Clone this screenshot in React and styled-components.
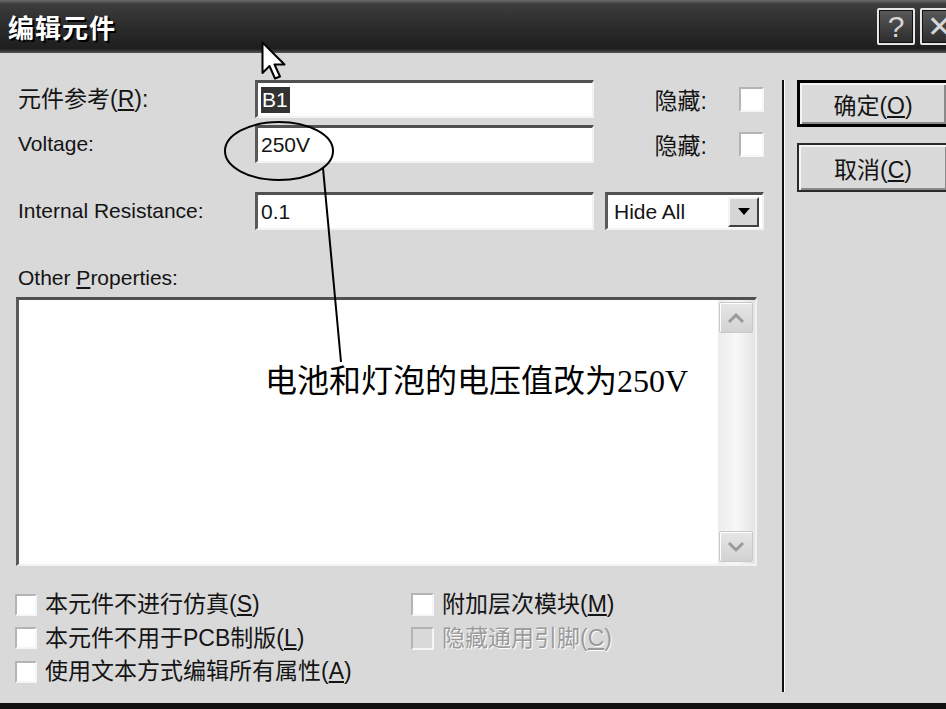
import React from 'react';
import styled, { createGlobalStyle } from 'styled-components';

const Global = createGlobalStyle`
  html, body { margin: 0; padding: 0; background: #d9d9d9; }
  #root { width: 946px; height: 709px; }
`;

const UI = `"Liberation Sans", "Noto Sans CJK SC", Arial, sans-serif`;

const Window = styled.div`
  position: relative;
  width: 946px;
  height: 709px;
  overflow: hidden;
  display: flex;
  flex-direction: column;
  background: #d9d9d9;
  font-family: ${UI};
  font-size: 21px;
  color: #141414;
`;

const TitleBar = styled.div`
  height: 53px;
  flex: none;
  display: flex;
  align-items: center;
  padding-left: 8px;
  background: linear-gradient(#6a6a6a 0, #3c3c3c 4px, #2e2e2e 45%, #1e1e1e 92%, #555 100%);
`;

const Title = styled.div`
  flex: 1;
  font-family: "Noto Sans CJK SC", sans-serif;
  font-weight: 700;
  font-size: 26px;
  letter-spacing: 1px;
  color: #fff;
  text-shadow: 2px 2px 0 #000;
`;

const TitleButtons = styled.div`
  display: flex;
  gap: 5px;
  margin-right: -12px;
  align-self: flex-start;
  margin-top: 8px;
`;

const TitleBtn = styled.div`
  width: 38px;
  height: 37px;
  box-sizing: border-box;
  border: 2px solid #e6e6e6;
  border-radius: 2px;
  box-shadow: inset 0 0 0 1px #111;
  background: linear-gradient(#5a5a5a, #2c2c2c);
  color: #d6d6d6;
  font-family: "Liberation Sans", sans-serif;
  font-size: 30px;
  line-height: 1;
  display: flex;
  align-items: center;
  justify-content: center;
`;

const Body = styled.div`
  flex: 1;
  display: flex;
`;

const LeftPane = styled.div`
  width: 782px;
  flex: none;
  padding-top: 27px;
  box-sizing: border-box;
`;

const Row = styled.div`
  display: grid;
  grid-template-columns: 255px 339px 170px;
  height: 38px;
  align-items: center;
  margin-top: ${p => p.$top || 0}px;
`;

const Label = styled.div`
  padding-left: 18px;
  font-size: ${p => (p.$cjk ? 23 : 21)}px;
  line-height: 24px;
  white-space: nowrap;
`;

const Sunken = styled.div`
  box-sizing: border-box;
  border-style: solid;
  border-width: 3px 2px 2px 3px;
  border-color: #505050 #f2f2f2 #f2f2f2 #5a5a5a;
  background: #fff;
`;

const Input = styled(Sunken)`
  height: 38px;
  display: flex;
  align-items: center;
  padding-left: 3px;
  font-size: 21px;
`;

const Selected = styled.span`
  background: #333;
  color: #fff;
  padding: 0 2px 0 1px;
  line-height: 26px;
`;

const HideGroup = styled.div`
  display: flex;
  justify-content: flex-end;
  align-items: center;
  gap: 32px;
  font-size: 23px;
`;

const Box = styled.div`
  width: ${p => p.$size || 22}px;
  height: ${p => p.$size || 22}px;
  box-sizing: border-box;
  flex: none;
  border-style: solid;
  border-width: 2px;
  border-color: #b4b4b4 #f6f6f6 #f6f6f6 #b4b4b4;
  background: ${p => (p.$disabled ? '#d9d9d9' : '#fff')};
`;

const Select = styled(Sunken)`
  justify-self: end;
  width: 159px;
  height: 38px;
  display: flex;
  align-items: center;
  justify-content: space-between;
  padding: 0 3px 0 6px;
`;

const DropBtn = styled.div`
  width: 31px;
  height: 30px;
  box-sizing: border-box;
  background: #d6d6d6;
  border-style: solid;
  border-width: 2px;
  border-color: #f4f4f4 #404040 #404040 #f4f4f4;
  display: flex;
  align-items: center;
  justify-content: center;
`;

const Arrow = styled.div`
  width: 0;
  height: 0;
  border-left: 6px solid transparent;
  border-right: 6px solid transparent;
  border-top: 7px solid #000;
`;

const SectionLabel = styled(Label)`
  margin-top: 36px;
`;

const TextArea = styled(Sunken)`
  margin: 7px 0 0 16px;
  width: 741px;
  height: 269px;
  display: flex;
`;

const AreaContent = styled.div`
  flex: 1;
`;

const ScrollBar = styled.div`
  width: 34px;
  display: flex;
  flex-direction: column;
  justify-content: space-between;
  padding: 2px 2px 2px 1px;
  background: linear-gradient(90deg, #ececec, #f8f8f8 50%, #e4e4e4);
`;

const ScrollBtn = styled.div`
  height: 31px;
  box-sizing: border-box;
  border: 1px solid #c8c8c8;
  border-radius: 2px;
  box-shadow: inset 1px 1px 0 #fff;
  background: linear-gradient(#e6e6e6, #d2d2d2);
  display: flex;
  align-items: center;
  justify-content: center;
`;

const Checks = styled.div`
  margin: 27px 0 0 15px;
  display: grid;
  grid-template-columns: 396px auto;
  grid-auto-rows: 23px;
  row-gap: 10.5px;
`;

const CheckItem = styled.div`
  display: flex;
  align-items: center;
  gap: 8px;
  font-size: 23px;
  line-height: 23px;
  white-space: nowrap;
  color: ${p => (p.$disabled ? '#9a9a9a' : '#141414')};
  text-shadow: ${p => (p.$disabled ? '1px 1px 0 #fff' : 'none')};
`;

const Divider = styled.div`
  width: 2px;
  margin: 27px 0 11px;
  background: #111;
  border-right: 1px solid #fff;
  flex: none;
`;

const RightPane = styled.div`
  padding: 27px 0 0 12px;
  display: flex;
  flex-direction: column;
  gap: 16px;
`;

const Button = styled.div`
  width: 152px;
  height: ${p => (p.$default ? 47 : 49)}px;
  box-sizing: border-box;
  border: ${p => (p.$default ? '3px solid #000' : '2px solid #2a2a2a')};
  background: #dadada;
  box-shadow: inset 2px 2px 0 #f4f4f4, inset -2px -2px 0 #8a8a8a;
  display: flex;
  align-items: center;
  justify-content: center;
  font-size: 23px;
`;

const Overlay = styled.svg`
  position: absolute;
  left: 0;
  top: 0;
  pointer-events: none;
`;

const Note = styled.div`
  position: absolute;
  left: 265px;
  top: 365px;
  font-family: "Liberation Serif", "Noto Sans CJK SC", serif;
  font-size: 32px;
  line-height: 32px;
  color: #000;
  white-space: nowrap;
`;

const Cursor = styled.svg`
  position: absolute;
  left: 261px;
  top: 41px;
`;

const BottomBar = styled.div`
  height: 6px;
  flex: none;
  background: #111;
`;

const Chevron = ({ up }) => (
  <svg width="18" height="12" viewBox="0 0 18 12">
    <path
      d={up ? 'M2 10 L9 3 L16 10' : 'M2 2 L9 9 L16 2'}
      fill="none"
      stroke="#9a9a9a"
      strokeWidth="3"
    />
  </svg>
);

const Check = ({ text, keyChar, disabled, size }) => (
  <CheckItem $disabled={disabled}>
    <Box $size={size} $disabled={disabled} />
    <span>{text}(<u>{keyChar}</u>)</span>
  </CheckItem>
);

export default function App() {
  return (
    <>
      <Global />
      <Window>
        <TitleBar>
          <Title>编辑元件</Title>
          <TitleButtons>
            <TitleBtn>?</TitleBtn>
            <TitleBtn>✕</TitleBtn>
          </TitleButtons>
        </TitleBar>
        <Body>
          <LeftPane>
            <Row>
              <Label $cjk>元件参考(<u>R</u>):</Label>
              <Input><Selected>B1</Selected></Input>
              <HideGroup>
                <span>隐藏:</span>
                <Box $size={25} />
              </HideGroup>
            </Row>
            <Row $top={7}>
              <Label>Voltage:</Label>
              <Input>250V</Input>
              <HideGroup>
                <span>隐藏:</span>
                <Box $size={25} />
              </HideGroup>
            </Row>
            <Row $top={29}>
              <Label>Internal Resistance:</Label>
              <Input>0.1</Input>
              <Select>
                <span>Hide All</span>
                <DropBtn><Arrow /></DropBtn>
              </Select>
            </Row>
            <SectionLabel>Other <u>P</u>roperties:</SectionLabel>
            <TextArea>
              <AreaContent />
              <ScrollBar>
                <ScrollBtn><Chevron up /></ScrollBtn>
                <ScrollBtn><Chevron /></ScrollBtn>
              </ScrollBar>
            </TextArea>
            <Checks>
              <Check text="本元件不进行仿真" keyChar="S" />
              <Check text="附加层次模块" keyChar="M" size={23} />
              <Check text="本元件不用于PCB制版" keyChar="L" />
              <Check text="隐藏通用引脚" keyChar="C" size={23} disabled />
              <Check text="使用文本方式编辑所有属性" keyChar="A" />
            </Checks>
          </LeftPane>
          <Divider />
          <RightPane>
            <Button $default><span>确定(<u>O</u>)</span></Button>
            <Button><span>取消(<u>C</u>)</span></Button>
          </RightPane>
        </Body>
        <BottomBar />
        <Overlay width="946" height="709" viewBox="0 0 946 709">
          <ellipse cx="279" cy="151" rx="54" ry="29" fill="none" stroke="#000" strokeWidth="2" />
          <line x1="323" y1="168" x2="341" y2="362" stroke="#000" strokeWidth="2" />
        </Overlay>
        <Note>电池和灯泡的电压值改为250V</Note>
        <Cursor width="28" height="42" viewBox="0 0 28 42">
          <path
            d="M1.5 1.5 L1.5 32 L8.5 25 L14 37.5 L19 35.5 L13.5 23.5 L23.5 23.5 Z"
            fill="#fff"
            stroke="#000"
            strokeWidth="2"
            strokeLinejoin="round"
          />
        </Cursor>
      </Window>
    </>
  );
}
